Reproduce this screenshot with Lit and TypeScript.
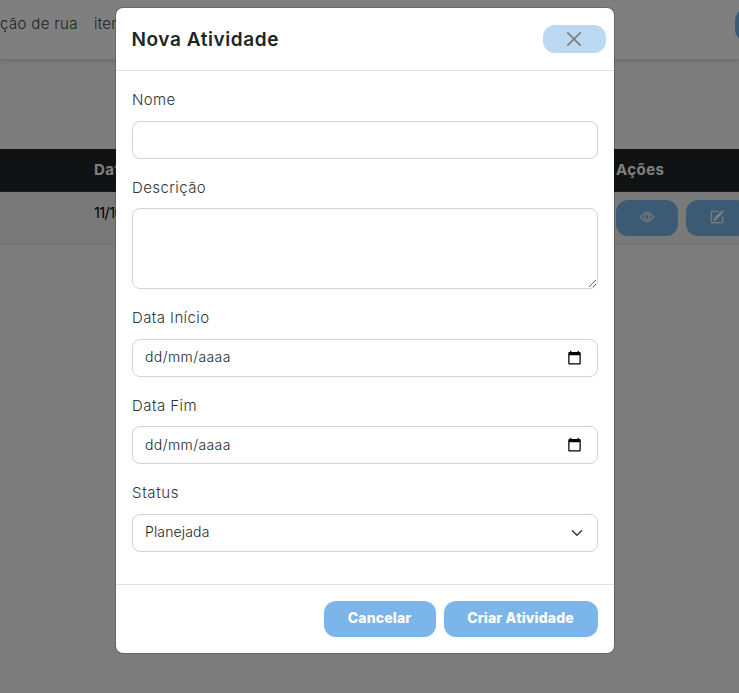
import { LitElement, html, css } from "lit";
import { customElement, property } from "lit/decorators.js";

const closeIcon = html`<svg viewBox="0 0 16 16" width="16" height="16"><path d="M.293.293a1 1 0 0 1 1.414 0L8 6.586 14.293.293a1 1 0 1 1 1.414 1.414L9.414 8l6.293 6.293a1 1 0 0 1-1.414 1.414L8 9.414l-6.293 6.293a1 1 0 0 1-1.414-1.414L6.586 8 .293 1.707a1 1 0 0 1 0-1.414z"/></svg>`;
const eyeIcon = html`<svg viewBox="0 0 16 16" width="14" height="14" fill="currentColor"><path d="M16 8s-3-5.500-8-5.500S0 8 0 8s3 5.500 8 5.500S16 8 16 8M1.173 8a13 13 0 0 1 1.660-2.043C4.120 4.668 5.880 3.500 8 3.500s3.879 1.168 5.168 2.457A13 13 0 0 1 14.828 8q-.086.130-.195.288c-.335.480-.830 1.120-1.465 1.755C11.879 11.332 10.119 12.500 8 12.500s-3.879-1.168-5.168-2.457A13 13 0 0 1 1.172 8z"/><path d="M8 5.500a2.500 2.500 0 1 0 0 5 2.500 2.500 0 0 0 0-5M4.500 8a3.500 3.500 0 1 1 7 0 3.500 3.500 0 0 1-7 0"/></svg>`;
const editIcon = html`<svg viewBox="0 0 16 16" width="14" height="14" fill="currentColor"><path d="M15.502 1.940a.5.5 0 0 1 0 .706L14.459 3.690l-2-2L13.502.646a.5.5 0 0 1 .707 0l1.293 1.293zm-1.750 2.456-2-2L4.939 9.210a.5.5 0 0 0-.121.196l-.805 2.414a.25.25 0 0 0 .316.316l2.414-.805a.5.5 0 0 0 .196-.120z"/><path fill-rule="evenodd" d="M1 13.500A1.500 1.500 0 0 0 2.500 15h11a1.500 1.500 0 0 0 1.500-1.500v-6a.5.5 0 0 0-1 0v6a.5.5 0 0 1-.5.5h-11a.5.5 0 0 1-.5-.5v-11a.5.5 0 0 1 .5-.5H9a.5.5 0 0 0 0-1H2.500A1.500 1.500 0 0 0 1 2.500z"/></svg>`;
const calendarIcon = html`<svg viewBox="0 0 24 24" width="15" height="15"><path d="M20 3h-1V1h-2v2H7V1H5v2H4c-1.100 0-2 .9-2 2v16c0 1.100.9 2 2 2h16c1.100 0 2-.9 2-2V5c0-1.100-.9-2-2-2zm0 18H4V8h16v13z"/></svg>`;
const chevronIcon = html`<svg viewBox="0 0 16 16" width="12" height="16"><path fill="none" stroke="#343a40" stroke-linecap="round" stroke-linejoin="round" stroke-width="2" d="m2 5 6 6 6-6"/></svg>`;

@customElement("activity-page")
class ActivityPage extends LitElement {
  static styles = css`
    :host { display: block; height: 100%; overflow: hidden; background: #f8f8f8; font: 300 15px/24px Inter, sans-serif; color: #444; }
    .nav { display: flex; justify-content: space-between; height: 59px; box-sizing: border-box; padding-top: 12px; background: #fff; box-shadow: 0 2px 5px rgba(0,0,0,.15); white-space: nowrap; position: relative; }
    .links { display: flex; gap: 16px; letter-spacing: .22px; }
    .links .first { width: 78px; letter-spacing: .35px; }
    .action { flex: none; width: 62px; height: 36px; border-radius: 14px; background: #7bb5e9; margin: -5px -58px 0 0; }
    .table { margin-top: 90px; white-space: nowrap; }
    .head, .row { display: grid; grid-template-columns: 94px 522px 62px 62px; box-sizing: border-box; }
    .head { height: 43px; padding-top: 9px; background: #212529; border-bottom: 1px solid #373b3e; color: #fff; font-weight: 700; font-size: 15px; letter-spacing: .45px; }
    .row { height: 53px; padding-top: 8px; background: #f2f2f2; border-bottom: 1px solid #dee2e6; color: #000; font-weight: 400; font-size: 14.500px; }
    .second { grid-column: 2; }
    .buttons { display: flex; gap: 8px; }
    .button { flex: none; width: 62px; height: 36px; display: grid; place-items: center; border-radius: 12px; background: #7bb5e9; color: #fff; }
    .button svg { transform: translateY(-1px); stroke: currentColor; stroke-width: .35; overflow: visible; }
    .date { letter-spacing: -.6px; padding-top: 1px; }
  `;
  render() {
    return html`
      <div class="nav"><div class="links"><span class="first">ção de rua</span><span>item</span></div><div class="action"></div></div>
      <div class="table">
        <div class="head"><span class="second">Data</span><span>Ações</span></div>
        <div class="row"><span class="second date">11/10/2024</span><div class="buttons"><span class="button">${eyeIcon}</span><span class="button">${editIcon}</span></div></div>
      </div>`;
  }
}

@customElement("form-field")
class FormField extends LitElement {
  @property() label = "";
  @property() kind = "text";
  static styles = css`
    :host { display: block; margin-bottom: 16px; }
    .label { display: block; height: 25.600px; line-height: 25px; margin-bottom: 8px; font-size: 15px; font-weight: 300; color: #333; letter-spacing: var(--label-spacing, .3px); }
    .control { display: flex; align-items: center; box-sizing: border-box; width: 100%; height: 38px; padding: 0 12px 2px; border: 1px solid #ced4da; border-radius: 8px; background: #fff; }
    .value { flex: 1; min-width: 0; border: 0; padding: 0; outline: 0; background: none; appearance: none; font: 300 14px/20px Inter, sans-serif; color: #212529; opacity: 1; }
    .value::placeholder { color: #212529; opacity: 1; }
    .date { padding-right: 15px; padding-bottom: 1px; }
    .date .value { letter-spacing: .4px; }
    .select { padding-right: 14px; }
    .select .value { letter-spacing: .15px; }
    .control svg { display: block; transform: translateY(1px); }
    .date svg { transform: translateY(.2px); }
    .area { display: block; box-sizing: border-box; width: 100%; height: 81px; border: 1px solid #ced4da; border-radius: 8px; resize: vertical; background: #fff; }
  `;
  control() {
    switch (this.kind) {
      case "area": return html`<textarea class="area"></textarea>`;
      case "date": return html`<div class="control date"><input class="value" placeholder="dd/mm/aaaa">${calendarIcon}</div>`;
      case "select": return html`<div class="control select"><select class="value"><option>Planejada</option></select>${chevronIcon}</div>`;
      default: return html`<div class="control"><input class="value"></div>`;
    }
  }
  render() { return html`<label class="label">${this.label}</label>${this.control()}`; }
}

@customElement("app-root")
class AppRoot extends LitElement {
  static styles = css`
    :host { display: block; position: relative; height: 693px; overflow: hidden; font-family: Inter, sans-serif; }
    .overlay { position: absolute; inset: 0; padding: 7px 0 0 115px; background: rgba(0,0,0,.5); }
    .modal { box-sizing: border-box; width: 500px; height: 647px; display: flex; flex-direction: column; border: 1px solid rgba(0,0,0,.175); border-radius: 8px; background: #fff; background-clip: padding-box; }
    .header { display: flex; justify-content: space-between; align-items: center; height: 63px; box-sizing: border-box; padding: 0 8px 0 15.500px; border-bottom: 1px solid #dee2e6; }
    .title { margin: 0; padding-top: 1px; font-size: 19px; line-height: 30px; font-weight: 600; color: #212529; letter-spacing: .58px; }
    .close { width: 63px; height: 28px; display: grid; place-items: center; padding: 0 2px 0 0; border: 0; border-radius: 12px; background: #7bb5e9; opacity: .5; }
    .close svg { width: 14px; height: 14px; }
    .body { flex: 1; padding: 16px 16px 0; }
    .n1 { --label-spacing: .4px; } .n2 { --label-spacing: .42px; } .n3 { --label-spacing: .4px; } .n4 { --label-spacing: .45px; } .n5 { --label-spacing: .65px; }
    .footer { display: flex; justify-content: flex-end; gap: 8px; height: 69px; box-sizing: border-box; padding: 16px; border-top: 1px solid #dee2e6; }
    .action { height: 36px; padding: 0 1px 2px 0; border: 0; border-radius: 12px; background: #7bb5e9; color: #fff; font: 800 14px/20px Inter, sans-serif; letter-spacing: .16px; white-space: nowrap; }
    .cancel { width: 112px; }
    .create { width: 154px; }
  `;
  render() {
    return html`
      <activity-page></activity-page>
      <div class="overlay"><section class="modal">
        <header class="header"><h5 class="title">Nova Atividade</h5><button class="close" aria-label="Fechar">${closeIcon}</button></header>
        <div class="body">
          <form-field class="n1" label="Nome"></form-field>
          <form-field class="n2" label="Descrição" kind="area"></form-field>
          <form-field class="n3" label="Data Início" kind="date"></form-field>
          <form-field class="n4" label="Data Fim" kind="date"></form-field>
          <form-field class="n5" label="Status" kind="select"></form-field>
        </div>
        <footer class="footer"><button class="action cancel">Cancelar</button><button class="action create">Criar Atividade</button></footer>
      </section></div>`;
  }
}
